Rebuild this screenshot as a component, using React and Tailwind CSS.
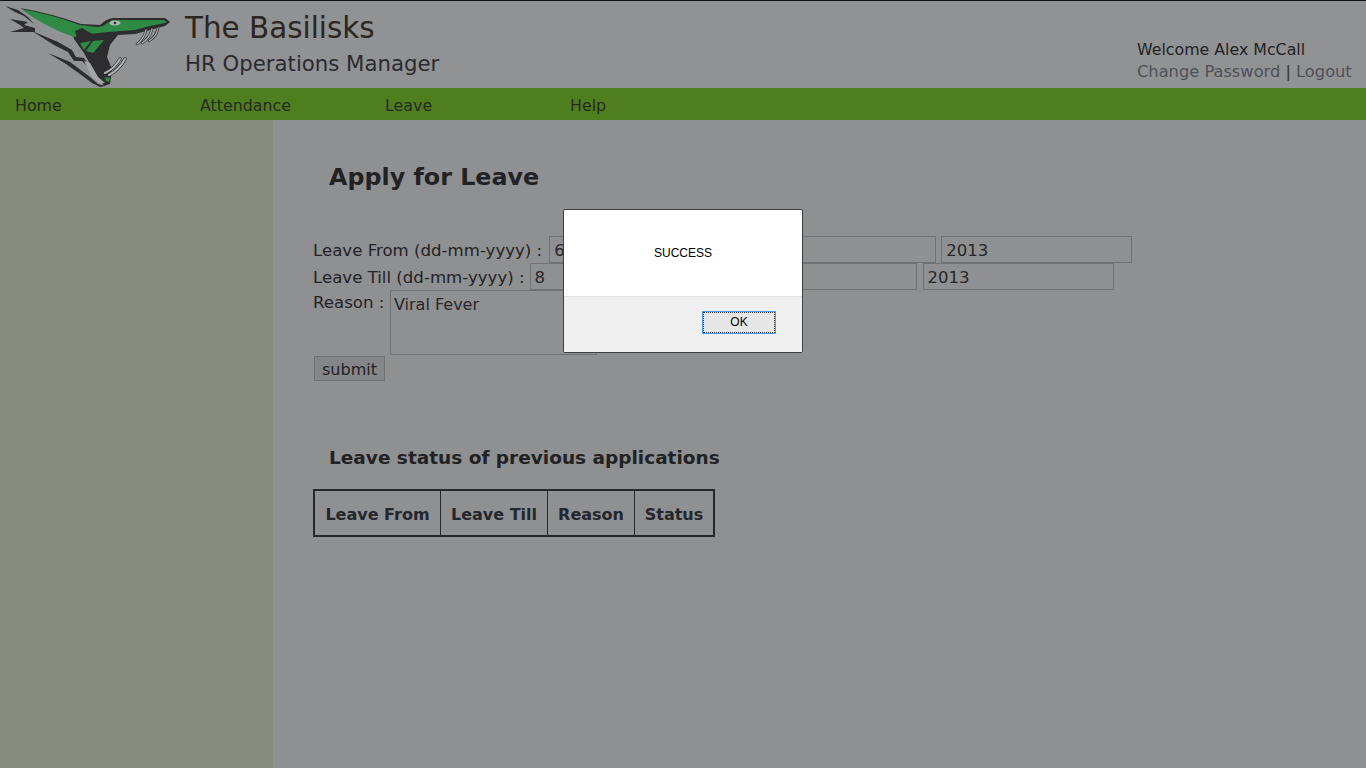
import React from 'react';

const Logo = () => (
  <svg width="175" height="87" viewBox="0 0 175 87" className="shrink-0">
    {/* feather + body lines */}
    <path d="M5 5 L18 9 L28 16 L34 23 L24 15 L15 11 Z" fill="#2d2d2f" />
    <path d="M10 18 L28 21 L24 24 L35 27 L35 31 L10 31 L24 27 L20 24 Z" fill="#2d2d2f" />
    <path d="M32 30 L58 41 L72 49 L76 56 L84 57 L92 70 L88 66 L82 60 L74 60 L68 51 L54 44 Z" fill="#2d2d2f" />
    <path d="M48 52 L70 61 L90 76 L98 83 L105 85 L100 86 L92 82 L80 73 L66 63 Z" fill="#2d2d2f" />
    {/* head silhouette */}
    <path d="M20 7 Q50 12 81 23 L100 24 Q106 18 113 17 L165 17 L170 21 L165 25 L135 33 L118 34 L110 44 L107 56 L112 68 L111 76 L110 83 L104 85 L100 80 L90 63 L84 52 L74 38 L73 33 Z" fill="#2d2d2f" />
    {/* lower jaw */}
    <path d="M84 60 L90 62 L98 76 L105 82 L100 83 L92 76 Z" fill="#a4a5a7" />
    {/* green */}
    <path d="M21 8 Q50 13 80 24 L97 26 L103 25 L112 19 L164 19 L167 21.5 L150 25 L135 29 L108 31 L90 33 L74 36 Q45 26 21 8 Z" fill="#2f8a45" />
    <path d="M75 30 L82 27 L94 34 L108 32 L100 37 L78 40 Z" fill="#2d2d2f" />
    <path d="M80 42 L91 40 L84 49 Z" fill="#2f8a45" />
    <path d="M93 40 L104 39 L93 52 L86 50 Z" fill="#2f8a45" />
    <path d="M105 76 L110 77 L109 81 L106 80 Z" fill="#2f8a45" />
    {/* eye */}
    <ellipse cx="115" cy="22" rx="5.5" ry="2.6" fill="#b2b3b4" />
    <circle cx="115" cy="22" r="1.3" fill="#2d2d2f" />
    {/* fangs */}
    <g fill="none" strokeLinecap="round">
      <path d="M146 29 Q144 38 137 43 M152 28 Q150 37 142 42 M158 27 Q157 35 149 40" stroke="#2d2d2f" strokeWidth="2.6" />
      <path d="M146 29 Q144 38 137 43 M152 28 Q150 37 142 42 M158 27 Q157 35 149 40" stroke="#a9aaac" strokeWidth="1.3" />
      <path d="M105 72 Q114 68 120 58 M109 74 Q119 69 125 58" stroke="#2d2d2f" strokeWidth="3.4" />
      <path d="M105 72 Q114 68 120 58 M109 74 Q119 69 125 58" stroke="#b2b3b4" strokeWidth="2" />
    </g>
  </svg>
);

const fieldClass = 'h-[27px] w-[191px] border border-[#707173] bg-[#8f9092] px-1 pt-[2px] text-[16.5px] text-[#272729] outline-none';

export default function App() {
  return (
    <div className="relative flex min-h-[768px] flex-col overflow-hidden bg-[#8f9092] font-['DejaVu_Sans',sans-serif] text-[#232325]">
      <header className="flex h-[88px] items-start border-t border-[#111] bg-[#919294]">
        <Logo />
        <div className="ml-[10px] mt-[9px]">
          <div className="text-[29.4px] leading-[36px] text-[#2a2622]">The Basilisks</div>
          <div className="mt-[4px] text-[21.25px] leading-[28px] text-[#2a2a30]">HR Operations Manager</div>
        </div>
        <div className="ml-auto mr-[15px] mt-[38px] w-[214px] whitespace-nowrap text-[15.8px] leading-[22px]">
          <div>Welcome Alex McCall</div>
          <div className="text-[16.25px] text-[#4e5058]">
            Change Password <span className="text-[#3d3020]">|</span> Logout
          </div>
        </div>
      </header>

      <nav className="flex h-[32px] items-center bg-[#4f7e1f] pl-[15px] pt-[3px] text-[15.85px] text-[#252a20]">
        <a className="w-[185px]">Home</a>
        <a className="w-[185px]">Attendance</a>
        <a className="w-[185px]">Leave</a>
        <a>Help</a>
      </nav>

      <div className="flex flex-1">
        <aside className="w-[273px] shrink-0 bg-[#868c7e]" />
        <main className="flex-1 pl-[40px]">
          <h1 className="ml-[16px] mt-[40px] text-[23.8px] font-bold leading-[34px] text-[#222224]">Apply for Leave</h1>

          <form className="mt-[42px] text-[16.6px] leading-[27px]">
            <div className="flex h-[27px] items-center">
              <span className="pt-[2px]">Leave From (dd-mm-yyyy) :</span>
              <input readOnly value="6" className={`${fieldClass} ml-[7px]`} />
              <input readOnly className={`${fieldClass} ml-[5px]`} />
              <input readOnly value="2013" className={`${fieldClass} ml-[5px]`} />
            </div>
            <div className="flex h-[27px] items-center">
              <span className="pt-[2px]">Leave Till (dd-mm-yyyy) :</span>
              <input readOnly value="8" className={`${fieldClass} ml-[5px]`} />
              <input readOnly className={`${fieldClass} ml-[5px]`} />
              <input readOnly value="2013" className={`${fieldClass} ml-[6px]`} />
            </div>
            <div className="flex items-start">
              <span className="w-[71px] whitespace-nowrap pt-[1px] leading-[24px]">Reason :</span>
              <textarea
                readOnly
                value="Viral Fever"
                className="ml-[6px] h-[65px] w-[207px] resize-none border border-[#707173] bg-[#8f9092] px-[3px] pt-[2px] text-[16px] leading-[24px] text-[#272729] outline-none"
              />
            </div>
            <button type="button" className="ml-[1px] mt-[1px] block h-[25px] w-[71px] border border-[#707173] bg-[#858688] pt-[2px] text-[16px] leading-[22px] text-[#232325]">
              submit
            </button>
          </form>

          <h2 className="ml-[16px] mt-[64px] text-[18.5px] font-bold leading-[26px] text-[#222224]">Leave status of previous applications</h2>

          <table className="mt-[18px] border-separate border-spacing-0 border-2 border-[#27272a] text-[16px] font-bold text-[#23262c]">
            <thead>
              <tr className="h-[44px]">
                <th className="w-[126px] border-r border-[#27272a] pt-[4px] font-bold">Leave From</th>
                <th className="w-[107px] border-r border-[#27272a] pt-[4px] font-bold">Leave Till</th>
                <th className="w-[87px] border-r border-[#27272a] pt-[4px] font-bold">Reason</th>
                <th className="w-[78px] pt-[4px] font-bold">Status</th>
              </tr>
            </thead>
          </table>
        </main>
      </div>

      <div className="absolute left-[563px] top-[209px] w-[240px] rounded-[2px] border border-[#3f3f3f] bg-white font-['Liberation_Sans',sans-serif] text-black">
        <div className="flex h-[86px] items-center justify-center text-[12px]">SUCCESS</div>
        <div className="flex h-[56px] items-start justify-end border-t border-[#e4e4e4] bg-[#f0f0f0] pr-[26px] pt-[14px]">
          <button type="button" className="h-[23px] w-[74px] border border-[#4a9bf5] bg-[#e6e6e6] pb-[2px] text-[12px] outline-1 -outline-offset-2 outline-dotted outline-[#333]">
            OK
          </button>
        </div>
      </div>
    </div>
  );
}
